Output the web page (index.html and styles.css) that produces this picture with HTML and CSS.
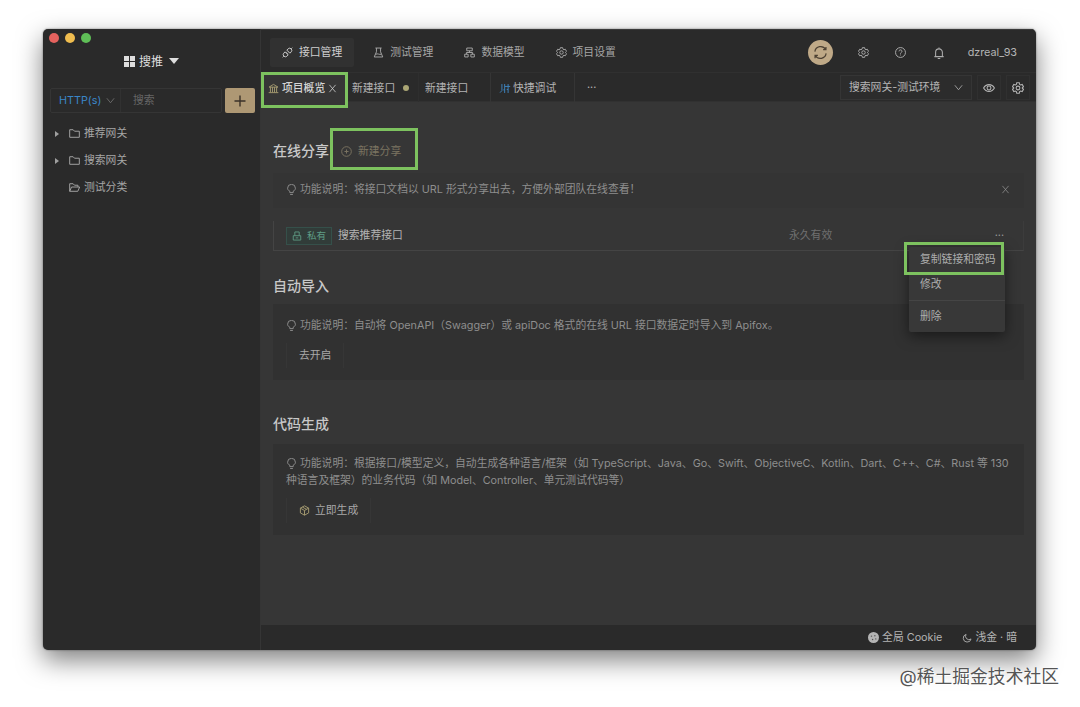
FILE: index.html
```
<!DOCTYPE html>
<html lang="zh-CN">
<head>
  <meta charset="UTF-8">
  <meta name="viewport" content="width=device-width, initial-scale=1.0">
  <title>接口管理 - 项目概览</title>
  <link rel="stylesheet" href="styles.css">
</head>
<body>
  <!-- shared icons -->
  <svg class="defs">
    <symbol id="gear" viewBox="0 0 16 16">
      <path d="M6.300 1h3.400l.5 2.200 1.300.8 2.100-.7 1.700 3L13.700 7.800v.4l1.600 1.500-1.700 3-2.100-.7-1.300.8-.5 2.200H6.300l-.5-2.200-1.300-.8-2.100.7-1.700-3L2.300 8.200v-.4L.7 6.300l1.700-3 2.100.7 1.300-.8z"/>
      <circle cx="8" cy="8" r="2.500"/>
    </symbol>
    <symbol id="bulb" viewBox="0 0 16 16">
      <path d="M5.500 12.500v-2C3.500 9.500 2.300 8 2.300 6.200a5.700 5.700 0 0 1 11.400 0c0 1.800-1.200 3.300-3.200 4.300v2zM6 15.200h4"/>
    </symbol>
    <symbol id="folder" viewBox="0 0 16 16">
      <path d="M1 13.500v-11h5l2 2.200h7v8.800z"/>
    </symbol>
    <symbol id="down" viewBox="0 0 16 16">
      <path d="M1.500 4l6.500 8 6.500-8"/>
    </symbol>
    <symbol id="close" viewBox="0 0 16 16">
      <path d="M2.500 1.500l11 13M13.500 1.500l-11 13"/>
    </symbol>
  </svg>

  <div class="window">
    <aside class="sidebar">
      <div class="lights"><i class="red"></i><i class="yellow"></i><i class="green"></i></div>
      <div class="project">
        <svg class="grid-icon" viewBox="0 0 11 11"><path d="M0 0h5v5H0zM6 0h5v5H6zM0 6h5v5H0zM6 6h5v5H6z"/></svg>
        <span>搜推</span>
        <i class="caret"></i>
      </div>
      <div class="search">
        <div class="search-box">
          <span class="protocol">HTTP(s) <svg class="icon small"><use href="#down"/></svg></span>
          <span class="placeholder">搜索</span>
        </div>
        <button class="add"><svg viewBox="0 0 12 12"><path d="M6 .5v11M.5 6h11"/></svg></button>
      </div>
      <ul class="tree">
        <li><i class="arrow"></i><svg class="icon"><use href="#folder"/></svg>推荐网关</li>
        <li><i class="arrow"></i><svg class="icon"><use href="#folder"/></svg>搜索网关</li>
        <li><i class="arrow none"></i><svg class="icon" viewBox="0 0 16 16"><path d="M1 13.500v-11h5l2 2.200h5v2.500M1 13.500l2.700-6.200h11.800l-2.700 6.200z"/></svg>测试分类</li>
      </ul>
    </aside>

    <div class="main">
      <header class="topbar">
        <nav class="nav">
          <a class="nav-item active"><svg class="icon" viewBox="0 0 16 16"><path d="M7 4.500l2-2a3.200 3.200 0 0 1 4.500 4.500l-2 2zM9 11.500l-2 2A3.200 3.200 0 0 1 2.500 9l2-2zM7.200 7L5.800 8.400M9 8.800l-1.400 1.400M13.500 2.500L15 1M1 15l1.500-1.500"/></svg>接口管理</a>
          <a class="nav-item"><svg class="icon" viewBox="0 0 16 16"><path d="M3.500 1.500h9M5 1.500v5.500L1.800 14.500h12.400L11 7V1.500M4 10.500c3-1.500 5 1 8 0"/></svg>测试管理</a>
          <a class="nav-item"><svg class="icon" viewBox="0 0 16 16"><path d="M4 1.500h8v4H4zM8 5.500V8M3.500 10.500V8h9v2.500M1 10.500h5v4H1zM10 10.500h5v4h-5z"/></svg>数据模型</a>
          <a class="nav-item"><svg class="icon"><use href="#gear"/></svg>项目设置</a>
        </nav>
        <div class="user">
          <span class="avatar"><svg viewBox="0 0 16 16"><path d="M2 7a6.200 6.200 0 0 1 11.500-2.200M14 9A6.200 6.200 0 0 1 2.500 11.200M13.800 2v3h-3M2.200 14v-3h3"/></svg></span>
          <svg class="icon"><use href="#gear"/></svg>
          <svg class="icon" viewBox="0 0 16 16"><circle cx="8" cy="8" r="7.200"/><path d="M5.800 6.300a2.200 2 0 1 1 3.400 1.600C8.300 8.500 8 8.800 8 9.700M8 11v1.200"/></svg>
          <svg class="icon bell" viewBox="0 0 16 16"><path d="M1.800 12.800h12.400M3.500 12.800V7a4.500 4.500 0 0 1 9 0v5.800M8 2.500V.8M6.300 15.200h3.400"/></svg>
          <span class="name">dzreal_93</span>
        </div>
      </header>

      <div class="tabbar">
        <div class="tab current">
          <svg class="icon gold" viewBox="0 0 16 16"><path d="M1.500 6L8 2l6.500 4zM3.500 6v7.500M6.500 6v7.500M9.500 6v7.500M12.500 6v7.500M1 14h14"/></svg>
          <span>项目概览</span>
          <svg class="icon small"><use href="#close"/></svg>
        </div>
        <div class="tab unsaved">新建接口<i class="dot"></i></div>
        <div class="tab plain">新建接口</div>
        <div class="tab debug">
          <svg class="icon blue" viewBox="0 0 16 16"><path d="M3.500 1.500v9.500M.8 14l2.700-3M7.500 1.500v13M5.500 10h2M8 5h7.500M12.500 1.500v13M10.500 9.500h2"/></svg>快捷调试
        </div>
        <span class="more">···</span>
        <div class="env">
          <span class="env-select">搜索网关-测试环境<svg class="icon small"><use href="#down"/></svg></span>
          <span class="env-button"><svg class="icon" viewBox="0 0 16 16"><path d="M.8 8C4 2 12 2 15.200 8 12 14 4 14 .8 8z"/><circle cx="8" cy="8" r="2.600"/></svg></span>
          <span class="env-button"><svg class="icon"><use href="#gear"/></svg></span>
        </div>
      </div>

      <div class="content">
        <div class="title-row">
          <h2>在线分享</h2>
          <button class="new-share"><svg class="icon" viewBox="0 0 16 16"><circle cx="8" cy="8" r="7"/><path d="M8 5v6M5 8h6"/></svg>新建分享</button>
        </div>
        <div class="tip">
          <p><svg class="icon"><use href="#bulb"/></svg>功能说明：将接口文档以 URL 形式分享出去，方便外部团队在线查看！</p>
          <svg class="icon small"><use href="#close"/></svg>
        </div>
        <div class="share-row">
          <span class="tag"><svg class="icon" viewBox="0 0 16 16"><path d="M2 7.500h12v7H2zM4.500 7.500v-6h7v6M6 11h4"/></svg>私有</span>
          <span class="share-name">搜索推荐接口</span>
          <span class="expire">永久有效</span>
          <div class="actions">
            <span>···</span>
            <div class="menu">
              <div class="menu-item">复制链接和密码</div>
              <div class="menu-item">修改</div>
              <div class="menu-item last">删除</div>
            </div>
          </div>
        </div>

        <h2 class="import-title">自动导入</h2>
        <div class="card import">
          <p><svg class="icon"><use href="#bulb"/></svg>功能说明：自动将 OpenAPI（Swagger）或 apiDoc 格式的在线 URL 接口数据定时导入到 Apifox。</p>
          <button>去开启</button>
        </div>

        <h2 class="code-title">代码生成</h2>
        <div class="card code">
          <p><svg class="icon"><use href="#bulb"/></svg>功能说明：根据接口/模型定义，自动生成各种语言/框架（如 TypeScript、Java、Go、Swift、ObjectiveC、Kotlin、Dart、C++、C#、Rust 等 130<br>种语言及框架）的业务代码（如 Model、Controller、单元测试代码等）</p>
          <button><svg class="icon gold" viewBox="0 0 16 16"><path d="M8 1.200l6 3.300v7L8 14.800l-6-3.300v-7zM2 4.500L8 8l6-3.500M8 8v6.800M5 3l6 3.300"/></svg>立即生成</button>
        </div>
      </div>

      <footer class="footer">
        <span><svg class="cookie" viewBox="0 0 12 12"><circle cx="6" cy="6" r="6"/><g><circle cx="3.800" cy="4.500" r=".8"/><circle cx="7.500" cy="4" r=".8"/><circle cx="5" cy="8.200" r=".8"/><circle cx="8.500" cy="7.500" r=".8"/></g></svg>全局 Cookie</span>
        <span><svg class="icon" viewBox="0 0 16 16"><path d="M6.500 2.200A6.300 6.300 0 1 0 14.500 9.500 5.500 5.500 0 0 1 6.500 2.200z"/></svg>浅金 · 暗</span>
      </footer>
    </div>
  </div>

  <!-- highlight frames -->
  <div class="frame frame-tab"></div>
  <div class="frame frame-share"></div>
  <div class="frame frame-copy"></div>
  <div class="watermark">@稀土掘金技术社区</div>
</body>
</html>
```
FILE: styles.css
```
* {
  box-sizing: border-box;
}
body {
  margin: 0;
  height: 707px;
  padding: 29px 44px 0 43px;
  overflow: hidden;
  background: #fff;
  color: #b4b4b4;
  font: 10.8px/17px Inter, "Noto Sans CJK SC", sans-serif;
  white-space: nowrap;
}
h2, p, ul {
  margin: 0;
  padding: 0;
}
button {
  font: inherit;
  color: inherit;
  background: none;
  border: none;
  padding: 0;
}
.defs {
  display: none;
}
.icon {
  width: 11px;
  height: 11px;
  flex: none;
  fill: none;
  stroke: currentColor;
  stroke-width: 1.4;
}
.icon.small {
  width: 9px;
  height: 9px;
}
.gold {
  color: #a3996f;
}
.icon.blue {
  width: 12px;
  color: #3d83bd;
}

.window {
  display: flex;
  height: 621px;
  border-radius: 5px;
  overflow: hidden;
  background: #2a2a2a;
  box-shadow: 0 10px 26px rgba(0, 0, 0, 0.5), 0 0 2px rgba(0, 0, 0, 0.5);
}

/* sidebar */
.sidebar {
  flex: none;
  width: 218px;
  border-right: 1px solid #353535;
}
.lights {
  display: flex;
  gap: 6px;
  padding: 4px 0 0 6px;
}
.lights i {
  width: 10px;
  height: 10px;
  border-radius: 50%;
}
.red {
  background: #e5625e;
}
.yellow {
  background: #f0bd4f;
}
.green {
  background: #5fbf57;
}
.project {
  display: flex;
  align-items: center;
  gap: 4px;
  height: 20px;
  margin: 8px 0 0 81px;
  color: #dedede;
  font-size: 12px;
}
.grid-icon {
  width: 11px;
  height: 11px;
  fill: #dedede;
}
.caret {
  margin-left: 2px;
  border: 5px solid transparent;
  border-top: 6px solid #dedede;
  border-bottom: 0;
}
.search {
  display: flex;
  gap: 3px;
  margin: 17px 0 0 7px;
}
.search-box {
  display: flex;
  width: 172px;
  height: 25px;
  border: 1px solid #353535;
  border-radius: 2px;
  line-height: 24px;
}
.protocol {
  display: flex;
  align-items: center;
  gap: 5px;
  width: 70px;
  padding-left: 8px;
  border-right: 1px solid #313131;
  color: #3a86c8;
}
.protocol .icon {
  color: #777;
}
.placeholder {
  padding-left: 12px;
  color: #666;
}
.add {
  width: 30px;
  height: 25px;
  border-radius: 2px;
  background: #ae9874;
  line-height: 0;
}
.add svg {
  width: 12px;
  height: 12px;
  stroke: #3a3128;
  stroke-width: 1.4;
}
.tree {
  margin-top: 7px;
  list-style: none;
}
.tree li {
  display: flex;
  align-items: center;
  height: 27px;
  padding-left: 12px;
  color: #a6a6a6;
}
.tree .icon {
  margin: 0 4px 0 10px;
}
.arrow {
  width: 4px;
  border: 3px solid transparent;
  border-left: 4px solid #a0a0a0;
  border-right: 0;
}
.arrow.none {
  border-color: transparent;
}

/* top bar */
.main {
  display: flex;
  flex-direction: column;
  flex: 1;
  min-width: 0;
}
.topbar {
  display: flex;
  justify-content: space-between;
  height: 43px;
  padding: 8px 19px 5px 9px;
  border-top: 1px solid #3a3a3a;
}
.nav {
  display: flex;
  gap: 7px;
}
.nav-item {
  display: flex;
  align-items: center;
  gap: 6px;
  height: 29px;
  padding: 0 12px 1px;
  border-radius: 2px;
  color: #a6a6a6;
}
.nav-item.active {
  background: #313131;
  color: #cfcfcf;
}
.user {
  display: flex;
  align-items: center;
  gap: 26.5px;
}
.user .icon {
  color: #adadad;
}
.user .bell {
  width: 12px;
  height: 12px;
  margin-right: -1px;
}
.avatar {
  display: flex;
  width: 25px;
  height: 25px;
  margin-right: -2px;
  padding: 5px;
  border-radius: 50%;
  background: #bfa987;
}
.avatar svg {
  fill: none;
  stroke: #4c4032;
  stroke-width: 1.3;
}
.name {
  margin-left: -2.5px;
}

/* tabs */
.tabbar {
  display: flex;
  height: 30px;
  border-top: 1px solid #303030;
  border-bottom: 1px solid #313131;
  line-height: 29px;
}
.tab {
  display: flex;
  align-items: center;
  height: 29px;
  padding-top: 1px;
  border-right: 1px solid #353535;
}
.current {
  width: 86px;
  gap: 3px;
  padding-left: 7px;
  background: #363636;
  color: #d4d4d4;
  font-weight: 500;
}
.unsaved {
  width: 72px;
  padding-left: 5px;
  border-color: #2e2e2e;
}
.plain {
  width: 72px;
  padding-left: 6px;
}
.debug {
  width: 84px;
  gap: 2px;
  padding-left: 8px;
}
.dot {
  width: 6px;
  height: 6px;
  margin-left: 8px;
  border-radius: 50%;
  background: #aba675;
}
.more {
  padding-left: 12px;
}
.env {
  display: flex;
  gap: 5px;
  margin: 2px 6px 0 auto;
}
.env-select {
  display: flex;
  align-items: center;
  justify-content: space-between;
  width: 132px;
  height: 25px;
  padding: 0 8px;
  border: 1px solid #353535;
  background: #2c2c2c;
}
.env-button {
  display: flex;
  align-items: center;
  justify-content: center;
  width: 24px;
  height: 25px;
  border: 1px solid #303030;
}
.env-button .icon {
  width: 12px;
  height: 12px;
}

/* content */
.content {
  flex: 1;
  padding: 37px 12px 0;
  background: #363636;
}
h2 {
  color: #c8c8c8;
  font-size: 14px;
  font-weight: 500;
  line-height: 24px;
}
.title-row {
  display: flex;
  height: 24px;
}
.new-share {
  display: flex;
  align-items: center;
  gap: 6px;
  margin-left: 12px;
  color: #7b7461;
}
p .icon {
  margin-right: 3px;
  vertical-align: -2px;
}
.tip {
  display: flex;
  justify-content: space-between;
  align-items: center;
  height: 35px;
  margin-top: 10px;
  padding: 0 14px 2px 13px;
  background: #343434;
  color: #8e8e8e;
}
.share-row {
  display: flex;
  align-items: center;
  height: 30px;
  margin-top: 13px;
  padding: 0 19px 0 12px;
  border: 1px solid #444;
  border-top: 0;
  border-right-color: #3c3c3c;
}
.tag {
  display: flex;
  align-items: center;
  gap: 5px;
  width: 46px;
  height: 18px;
  padding-left: 5px;
  border: 1px solid #35504a;
  background: #313c39;
  color: #5f9c85;
  font-size: 9.5px;
}
.tag .icon {
  width: 10px;
  height: 10px;
}
.share-name {
  width: 457px;
  padding-left: 6px;
}
.expire {
  color: #707070;
}
.actions {
  position: relative;
  margin-left: auto;
  color: #999;
}
.menu {
  position: absolute;
  top: 20px;
  right: -1px;
  width: 96px;
  height: 85px;
  border-radius: 2px;
  background: #383838;
  color: #adadad;
  box-shadow: 0 4px 14px rgba(0, 0, 0, 0.5);
}
.menu-item {
  height: 25px;
  padding-left: 11px;
  line-height: 25px;
}
.menu-item.last {
  height: 32px;
  margin-top: 3px;
  border-top: 1px solid #454545;
  line-height: 31px;
}
.import-title {
  margin-top: 23px;
}
.card {
  margin-top: 6px;
  padding: 13px 13px 0;
  background: #313131;
  color: #8e8e8e;
}
.card button {
  display: flex;
  align-items: center;
  gap: 5px;
  height: 25px;
  margin-top: 9px;
  padding: 0 12px;
  border: 1px solid #363636;
  border-width: 0 1px;
  color: #a8a8a8;
}
.import {
  height: 76px;
}
.code-title {
  margin-top: 32px;
}
.code {
  height: 91px;
  margin-top: 8px;
  padding-top: 11px;
}

.footer {
  display: flex;
  justify-content: flex-end;
  gap: 20px;
  height: 25px;
  padding-right: 19px;
  line-height: 25px;
}
.footer span {
  display: flex;
  align-items: center;
  gap: 3px;
}
.footer .icon {
  width: 10px;
  height: 10px;
}
.cookie {
  width: 11px;
  height: 11px;
  fill: #b4b4b4;
}
.cookie g {
  fill: #555;
}

.frame {
  position: absolute;
  border: 3px solid #7dc25f;
}
.frame-tab {
  left: 261px;
  top: 72px;
  width: 87px;
  height: 36px;
}
.frame-share {
  left: 330px;
  top: 128px;
  width: 88px;
  height: 42px;
}
.frame-copy {
  left: 904px;
  top: 242px;
  width: 100px;
  height: 33px;
}
.watermark {
  position: absolute;
  right: 21px;
  bottom: 17px;
  color: #555;
  font-size: 17.8px;
  line-height: 26px;
  text-shadow: 0 0 1px #fff, 1px 1px 0 #fff;
}
```
